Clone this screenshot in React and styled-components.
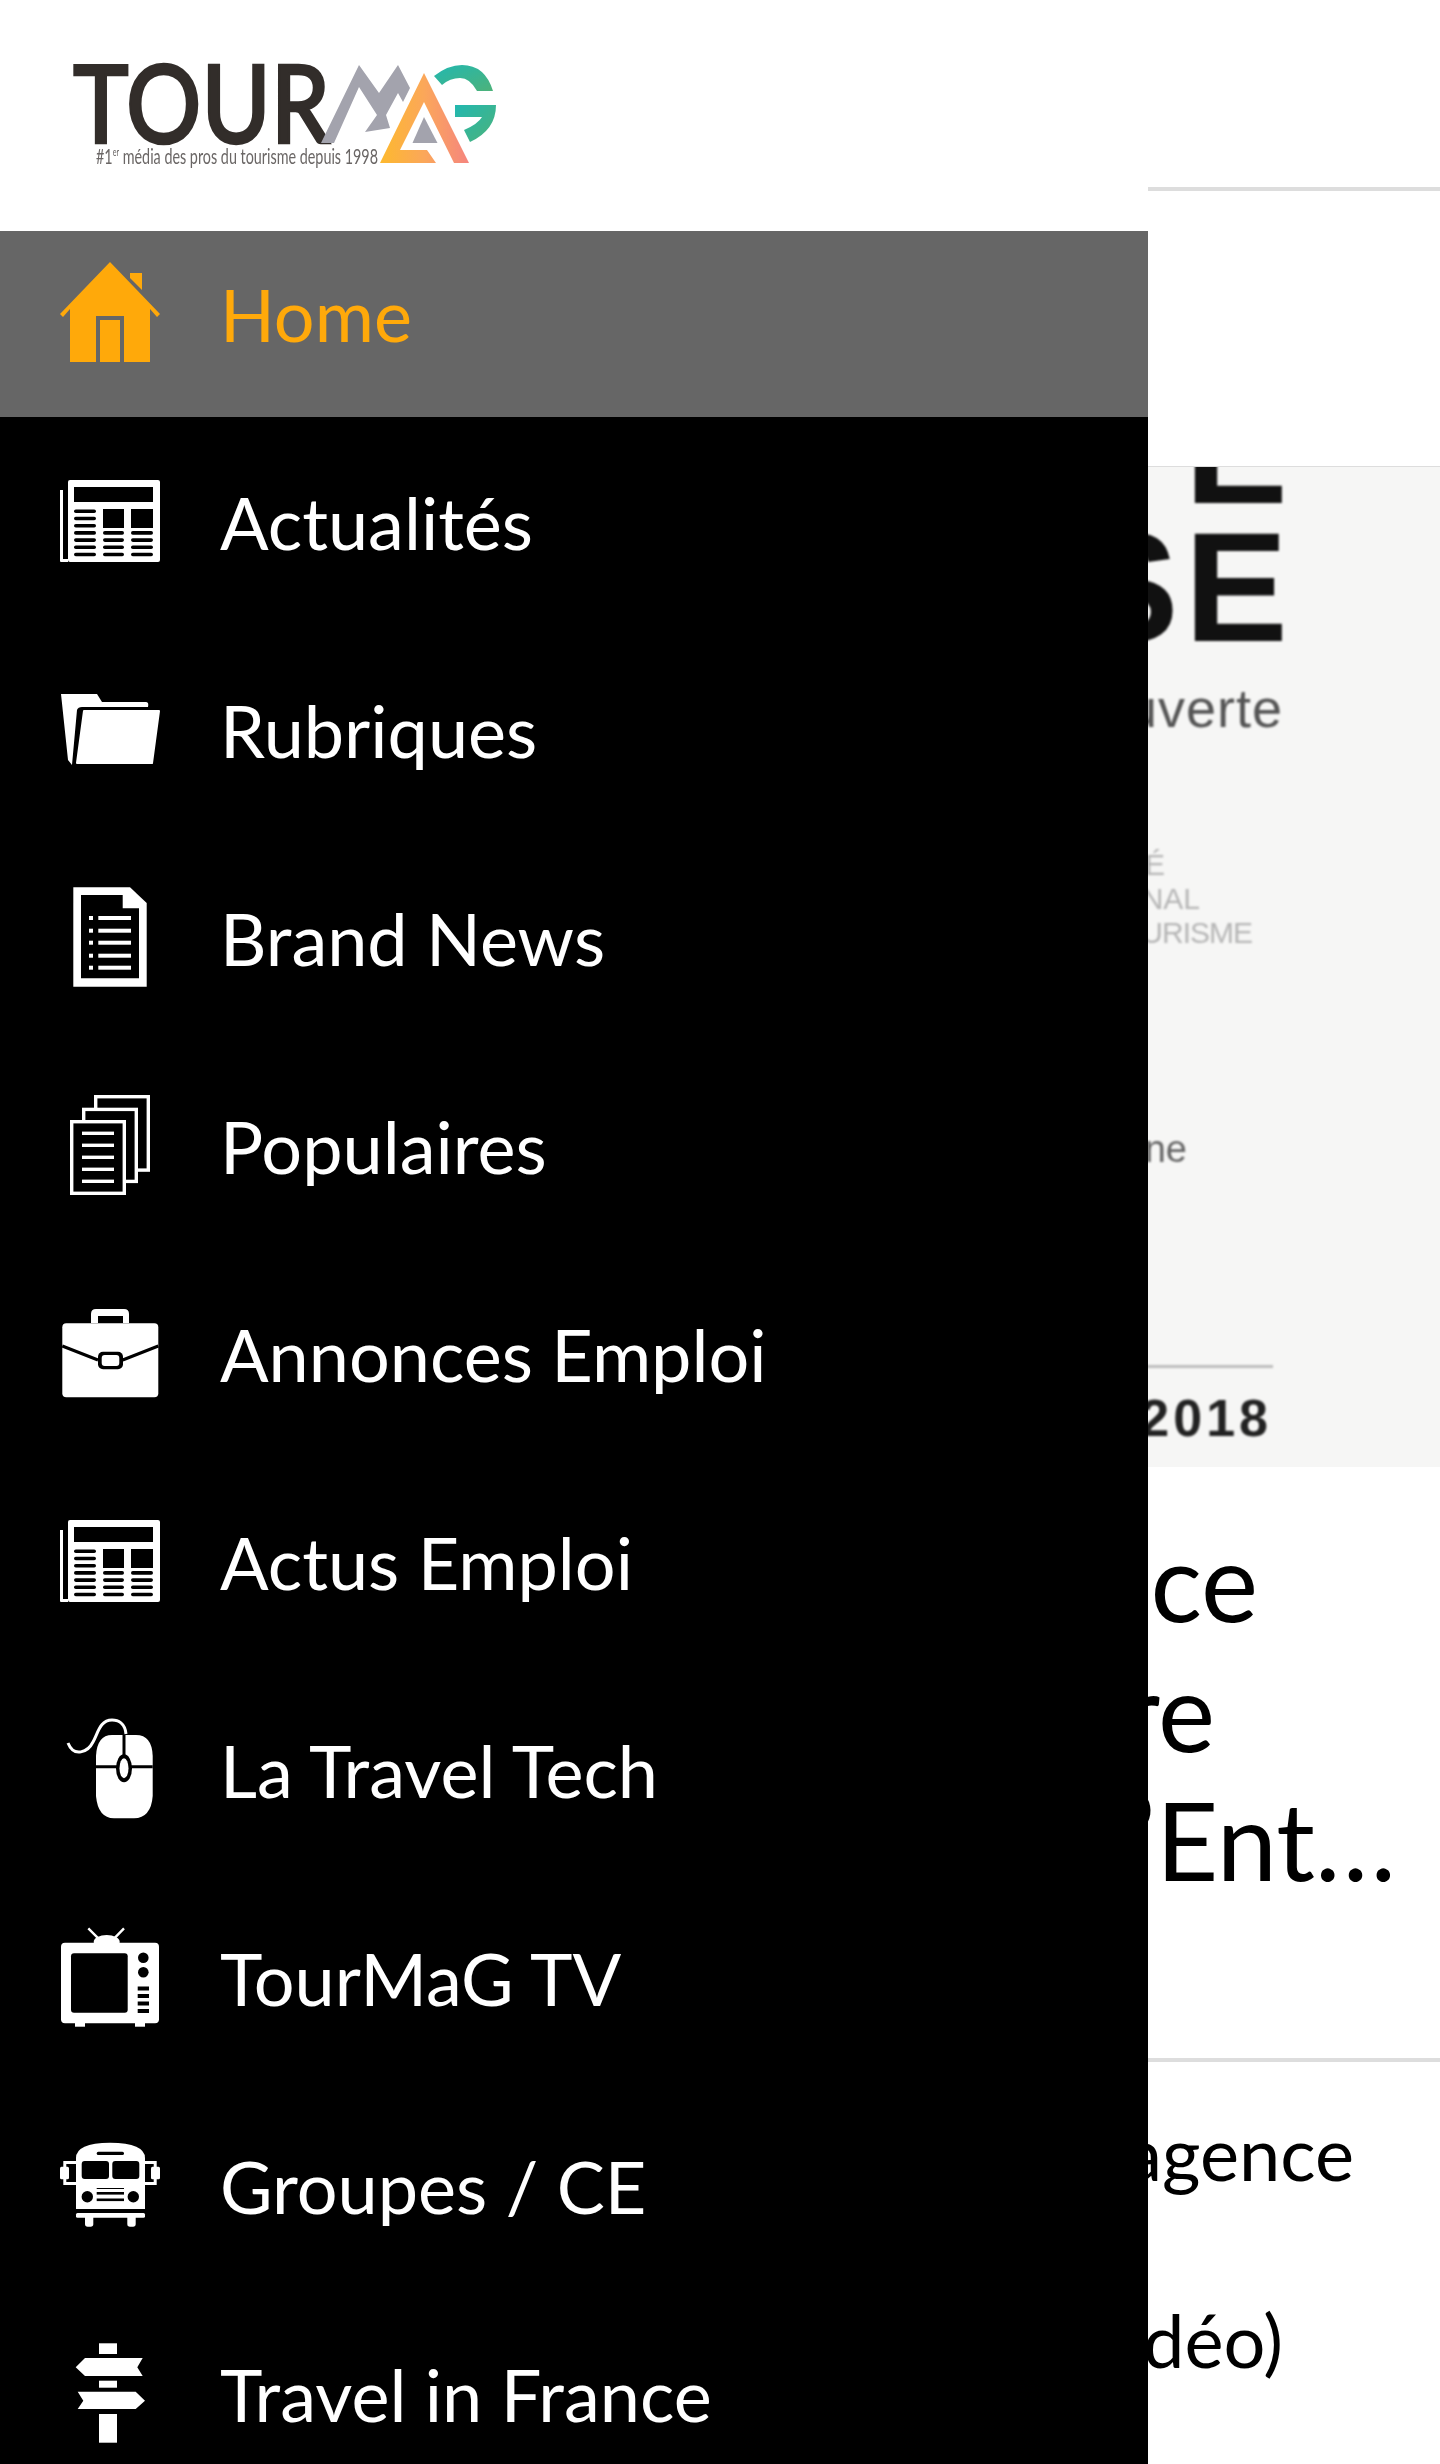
import React from 'react'
import styled, { createGlobalStyle } from 'styled-components'

const GlobalStyle = createGlobalStyle`
  html, body { margin: 0; padding: 0; background: #fff; }
  body { font-family: Lato, "Liberation Sans", sans-serif; }
`

const Page = styled.div`
  position: relative;
  width: 1440px;
  height: 2464px;
  overflow: hidden;
  background: #fff;
`

/* page behind the drawer */
const TopBar = styled.div`
  height: 187px;
  border-bottom: 4px solid #ddd;
`
const TopGap = styled.div`
  height: 275px;
  border-bottom: 1px solid #ddd;
`
const Poster = styled.div`
  height: 1000px;
  background: #f6f6f5;
  overflow: hidden;
  display: flex;
  flex-direction: column;
  & > * { filter: blur(1.1px); }
`
const PosterLine = styled.div`
  flex: none;
  height: ${p => p.$h}px;
  line-height: ${p => p.$h}px;
  margin-top: ${p => p.$top || 0}px;
  padding-right: ${p => p.$right}px;
  text-align: right;
  white-space: nowrap;
  font-family: "Liberation Sans", Arial, sans-serif;
  font-size: ${p => p.$size}px;
  font-weight: ${p => p.$weight || 400};
  letter-spacing: ${p => p.$track || 0}px;
  color: ${p => p.$color || '#111'};
`
const PosterRule = styled.div`
  flex: none;
  height: 3px;
  margin: ${p => p.$top}px ${p => p.$right}px 0 0;
  background: #bdbdbd;
`
const Title = styled.h1`
  margin: 0;
  padding-top: 49px;
  height: 595px;
  box-sizing: border-box;
  border-bottom: 4px solid #ddd;
  font-size: 108px;
  font-weight: 400;
  color: #000;
`
const TitleLine = styled.div`
  height: 129.5px;
  line-height: 129.5px;
  text-align: right;
  white-space: nowrap;
  padding-right: ${p => p.$right}px;
`
const BodyLine = styled.div`
  height: 187px;
  line-height: 187px;
  text-align: right;
  white-space: nowrap;
  font-size: 74px;
  color: #000;
  padding-right: ${p => p.$right}px;
`
const BodyLines = styled.div`
  margin-top: -3px;
`

/* drawer */
const Drawer = styled.nav`
  position: absolute;
  left: 0;
  top: 0;
  width: 1148px;
  height: 2464px;
  background: #000;
  overflow: hidden;
`
const DrawerHead = styled.div`
  height: 231px;
  background: #fff;
`
const Logo = styled.svg`
  display: block;
  filter: blur(0.4px);
`
const Menu = styled.ul`
  list-style: none;
  margin: 0;
  padding: 0;
  display: flex;
  flex-direction: column;
  gap: 22px;
`
const Item = styled.li`
  height: 186px;
  box-sizing: border-box;
  padding: 31px 0 55px 60px;
  display: flex;
  align-items: center;
  gap: 60px;
  background: ${p => (p.$active ? '#666' : 'transparent')};
  color: ${p => (p.$active ? '#ffa90a' : '#fff')};
`
const Label = styled.span`
  margin-top: 3px;
  font-size: 72px;
  line-height: 90px;
  white-space: nowrap;
`
const Glyph = styled.svg`
  flex: none;
  width: 100px;
  height: 100px;
  display: block;
  overflow: visible;
`

const Home = () => (
  <Glyph viewBox="0 0 100 100" fill="currentColor">
    <path d="M50 0L100 52 97 55 90 47V100H64V54H36V100H10V47L3 55 0 52Z" />
    <rect x="40" y="58" width="20" height="42" />
    <path d="M70 11H82V28L70 16Z" />
  </Glyph>
)

const Newspaper = () => (
  <Glyph viewBox="0 0 100 100">
    <path d="M0 20H3V89H8V92H1Q0 92 0 91Z" fill="#fff" />
    <rect x="8" y="10" width="92" height="82" rx="2" fill="#fff" />
    <rect x="14" y="17" width="79" height="15" fill="#000" />
    <rect x="43" y="39" width="21" height="19" fill="#000" />
    <rect x="71" y="39" width="22" height="19" fill="#000" />
    {[0, 1, 2, 3, 4, 5, 6].map(i => (
      <rect key={i} x="14" y={39.5 + i * 7.2} width="22" height="3.6" rx="1.8" fill="#000" />
    ))}
    {[3, 4, 5, 6].map(i => (
      <g key={i} fill="#000">
        <rect x="43" y={39.5 + i * 7.2} width="21" height="3.6" rx="1.8" />
        <rect x="71" y={39.5 + i * 7.2} width="22" height="3.6" rx="1.8" />
      </g>
    ))}
  </Glyph>
)

const Folder = () => (
  <Glyph viewBox="0 0 100 100" fill="#fff">
    <path d="M1 16H37L42 24H86Q89 24 88 29H22Q18 29 17 32L12 87 8 82Z" />
    <path d="M24 33H99L92 85H17Z" stroke="#fff" strokeWidth="2" strokeLinejoin="round" />
  </Glyph>
)

const Doc = () => (
  <Glyph viewBox="0 0 100 100">
    <path d="M13.3 1.3H70L86.7 17V100.7H13.3Z" fill="#fff" />
    <path d="M21 9H62.7V22.3H79V92.3H21Z" fill="#000" />
    {[30, 42.7, 54.7, 67.7, 79.7].map(y => (
      <g key={y} fill="#fff">
        <rect x="29" y={y} width="4" height="4" />
        <rect x="38.3" y={y} width="32.7" height="4" />
      </g>
    ))}
  </Glyph>
)

const Pages = () => (
  <Glyph viewBox="0 0 100 100" fill="#000" stroke="#fff" strokeWidth="3.4">
    <rect x="35.7" y="2.7" width="52.6" height="73.4" />
    <rect x="23.7" y="15.4" width="52.6" height="72" />
    <rect x="11.7" y="27.7" width="52.6" height="71.6" />
    {[39.3, 51.3, 63.3, 75.3, 87.3].map(y => (
      <path key={y} d={`M22 ${y}H54`} />
    ))}
  </Glyph>
)

const Briefcase = () => (
  <Glyph viewBox="0 0 100 100">
    <path d="M31 21V12Q31 7 36 7H64Q69 7 69 12V21H63V14H38V21Z" fill="#fff" />
    <rect x="2.3" y="21.3" width="96" height="74" rx="4" fill="#fff" />
    <path d="M2.3 44L38 58M62.7 58L98.3 44" stroke="#000" strokeWidth="3" fill="none" />
    <rect x="38" y="49.7" width="25" height="17.6" rx="5" fill="#000" />
    <rect x="41.7" y="53" width="17.6" height="11" rx="3" fill="#fff" />
  </Glyph>
)

const Mouse = () => (
  <Glyph viewBox="0 0 100 100">
    <path d="M66 16C65 5 58 2 52 2C40 2 38 15 33 24C28 34 14 40 8 25" stroke="#fff" strokeWidth="3" fill="none" />
    <path d="M52 17H76Q92 17 92.7 38V78Q91 100 74 100.3H54Q38 100 36 78V38Q37 17 52 17Z" fill="#fff" />
    <path d="M36 48.7H92.7" stroke="#000" strokeWidth="3" />
    <path d="M64 17V37" stroke="#000" strokeWidth="3" />
    <ellipse cx="64" cy="50.3" rx="8" ry="14" fill="#000" />
    <ellipse cx="64" cy="50.3" rx="4.5" ry="10" fill="#fff" />
  </Glyph>
)

const Tv = () => (
  <Glyph viewBox="0 0 100 100">
    <path d="M28.3 2.3L39.3 13.3M64 2.3L53.3 13.3" stroke="#fff" strokeWidth="2.4" />
    <ellipse cx="46.7" cy="16" rx="13" ry="7" fill="#fff" />
    <rect x="1" y="16.7" width="98" height="80.6" rx="4" fill="#fff" />
    <rect x="15" y="95" width="10" height="5.7" fill="#fff" />
    <rect x="75" y="95" width="10" height="5.7" fill="#fff" />
    <rect x="11" y="27.3" width="56.7" height="59.4" rx="3" fill="#000" />
    <circle cx="83.3" cy="31.7" r="5.3" fill="#000" />
    <circle cx="83.3" cy="46.3" r="5.3" fill="#000" />
    {[60.5, 68, 75.5, 83].map(y => (
      <rect key={y} x="77.7" y={y} width="11.3" height="4" fill="#000" />
    ))}
  </Glyph>
)

const Bus = () => (
  <Glyph viewBox="0 0 100 100">
    <path d="M16 75V24Q16 9 50 8.7Q85 9 85 24V75Z" fill="#fff" />
    <path d="M16 28.5H4.8V49.5H16M85 28.5H95.2V49.5H85" stroke="#fff" strokeWidth="3" fill="none" />
    <rect x="0" y="32.7" width="9" height="12.6" rx="1.5" fill="#fff" />
    <rect x="91" y="32.7" width="9" height="12.6" rx="1.5" fill="#fff" />
    <rect x="21.7" y="27" width="27.3" height="18" rx="3" fill="#000" />
    <rect x="52.3" y="27" width="27" height="18" rx="3" fill="#000" />
    <rect x="36.7" y="17.7" width="27.3" height="3.3" rx="1.6" fill="#000" />
    <circle cx="27.3" cy="62.7" r="5.7" fill="#000" />
    <circle cx="73.3" cy="62.7" r="5.7" fill="#000" />
    <rect x="36.7" y="58" width="27.3" height="2.6" fill="#000" />
    <rect x="36.7" y="64.5" width="27.3" height="2.6" fill="#000" />
    <rect x="36.7" y="54" width="27.3" height="1" fill="#000" />
    <rect x="16" y="79" width="69" height="4.7" rx="1.5" fill="#fff" />
    <path d="M25 83H33.3V90Q33.3 92.7 30.6 92.7H27.7Q25 92.7 25 90Z" fill="#fff" />
    <path d="M67.3 83H75.7V90Q75.7 92.7 73 92.7H70Q67.3 92.7 67.3 90Z" fill="#fff" />
  </Glyph>
)

const Sign = () => (
  <Glyph viewBox="0 0 100 100" fill="#fff">
    <rect x="39" y="1.3" width="18" height="10.7" />
    <path d="M15.7 25.3L25 16H82.7L77.3 25.3 82.7 34H25Z" />
    <rect x="39" y="38.7" width="18" height="7" />
    <path d="M17.7 49.7H75.7L85 58.7 75.7 67H17.7L23.3 58.7Z" />
    <rect x="39" y="72" width="18" height="28.7" />
  </Glyph>
)

const items = [
  ['Home', Home],
  ['Actualités', Newspaper],
  ['Rubriques', Folder],
  ['Brand News', Doc],
  ['Populaires', Pages],
  ['Annonces Emploi', Briefcase],
  ['Actus Emploi', Newspaper],
  ['La Travel Tech', Mouse],
  ['TourMaG TV', Tv],
  ['Groupes / CE', Bus],
  ['Travel in France', Sign],
]

const TourmagLogo = () => (
  <Logo width="560" height="231" viewBox="0 0 560 231">
    <defs>
      <linearGradient id="logoA" x1="0" x2="1" y1="0" y2="0">
        <stop offset="0" stopColor="#fdb92e" />
        <stop offset="0.5" stopColor="#fba75a" />
        <stop offset="1" stopColor="#f5857f" />
      </linearGradient>
      <linearGradient id="logoG" x1="0" x2="1" y1="0" y2="1">
        <stop offset="0" stopColor="#22b8b0" />
        <stop offset="1" stopColor="#4db27a" />
      </linearGradient>
    </defs>
    <text x="73" y="143" fontFamily="Lato, sans-serif" fontSize="108" fontWeight="500" fill="#322d2a" stroke="#322d2a" strokeWidth="2.5" textLength="257" lengthAdjust="spacingAndGlyphs">TOUR</text>
    <path d="M321 143L359 65 379 93 398 65 410 88 403 102 398 93 386 115 390 128 365 132 377 115 359 87 334 143Z" fill="#a3a3ad" />
    <path d="M424 73L469 163H454L424 102 400 150H427L436 163H380Z" fill="url(#logoA)" />
    <path d="M424 117L437.5 143H412.5Z" fill="#a3a3ad" />
    <path d="M434 76Q448 65 462 65 485 65 493 91H477Q470 78 460 78 450 78 442 85Z" fill="url(#logoG)" />
    <path d="M455 105H496Q496 130 470 142L464 130Q478 124 482 117H455Z" fill="url(#logoG)" />
    <text x="96" y="164" fontFamily="Lato, sans-serif" fontSize="22" fill="#6a6665" textLength="282" lengthAdjust="spacingAndGlyphs">
      #1<tspan fontSize="11" dy="-8">er</tspan><tspan dy="8"> média des pros du tourisme depuis 1998</tspan>
    </text>
  </Logo>
)

export default function App() {
  return (
    <Page>
      <GlobalStyle />
      <TopBar />
      <TopGap />
      <Poster>
        <PosterLine $h={105} $top={-70} $right={146} $size={155} $weight={700} $track={6}>ITE</PosterLine>
        <PosterLine $h={105} $top={33} $right={146} $size={155} $weight={700} $track={6}>ISE</PosterLine>
        <PosterLine $h={60} $top={38} $right={157} $size={54} $track={1} $color="#555">ouverte</PosterLine>
        <PosterLine $h={34} $top={110} $right={275} $size={30} $color="#b5b5b5">É</PosterLine>
        <PosterLine $h={34} $right={240} $size={30} $color="#b5b5b5">NAL</PosterLine>
        <PosterLine $h={34} $right={188} $size={30} $track={-1} $color="#b5b5b5">URISME</PosterLine>
        <PosterLine $h={44} $top={177} $right={253} $size={38} $color="#666">ne</PosterLine>
        <PosterRule $top={194} $right={167} />
        <PosterLine $h={50} $top={25} $right={168} $size={52} $weight={700} $track={4} $color="#222">2018</PosterLine>
        <PosterLine $h={30} $top={33} $right={170} $size={30} $color="#aaa">(1/2)</PosterLine>
      </Poster>
      <Title>
        <TitleLine $right={182}>ce</TitleLine>
        <TitleLine $right={225}>re</TitleLine>
        <TitleLine $right={44}>’Ent…</TitleLine>
      </Title>
      <BodyLines>
        <BodyLine $right={86}>agence</BodyLine>
        <BodyLine $right={157}>vidéo)</BodyLine>
      </BodyLines>
      <Drawer>
        <DrawerHead>
          <TourmagLogo />
        </DrawerHead>
        <Menu>
          {items.map(([label, Icon], i) => (
            <Item key={label} $active={i === 0}>
              <Icon />
              <Label>{label}</Label>
            </Item>
          ))}
        </Menu>
      </Drawer>
    </Page>
  )
}
